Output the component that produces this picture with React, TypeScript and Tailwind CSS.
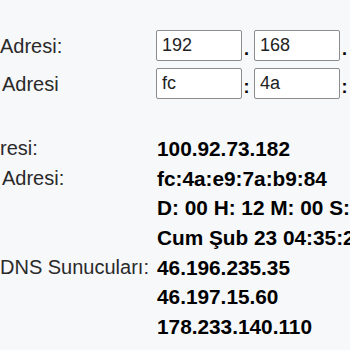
import React from "react";

const inputRows = [
  { label: "Adresi:", indent: "", sep: ".", values: ["192", "168", "1"] },
  { label: "Adresi", indent: "pl-[2px]", sep: ":", values: ["fc", "4a", "e9"] },
];

const infoRows = [
  { label: "resi:", indent: "", value: "100.92.73.182" },
  { label: "Adresi:", indent: "pl-[2px]", value: "fc:4a:e9:7a:b9:84" },
  { label: "", indent: "", value: "D: 00 H: 12 M: 00 S: 27" },
  { label: "", indent: "", value: "Cum Şub 23 04:35:27 2018" },
  { label: "DNS Sunucuları:", indent: "", value: "46.196.235.35" },
  { label: "", indent: "", value: "46.197.15.60" },
  { label: "", indent: "", value: "178.233.140.110" },
];

export default function App() {
  return (
    <div className="w-[350px] h-[350px] overflow-hidden bg-[#f6f8fa] font-['Liberation_Sans',Arial,sans-serif] text-[20px] text-[#2a2a2a]">
      <div className="pt-[30px] flex flex-col gap-[7px]">
        {inputRows.map((row, i) => (
          <div key={i} className="flex items-center h-[31px] whitespace-nowrap">
            <div className={`w-[156px] shrink-0 ${row.indent}`}>{row.label}</div>
            {row.values.map((v, j) => (
              <React.Fragment key={j}>
                {j > 0 && (
                  <span className="w-[12px] shrink-0 pr-[3px] text-center text-[18px] font-bold text-black leading-none pt-[6px]">
                    {row.sep}
                  </span>
                )}
                <input
                  readOnly
                  defaultValue={v}
                  className="w-[86px] h-[31px] shrink-0 rounded-[2px] border border-[#8c8c8c] bg-white pl-[5px] text-[18px] text-[#222] outline-none"
                />
              </React.Fragment>
            ))}
          </div>
        ))}
      </div>
      <div className="mt-[35px] flex flex-col">
        {infoRows.map((row, i) => (
          <div key={i} className="flex h-[29.7px] leading-[29.7px] whitespace-nowrap">
            <div className={`w-[157px] shrink-0 ${row.indent}`}>{row.label}</div>
            <div className="font-bold text-black text-[20.8px]">{row.value}</div>
          </div>
        ))}
      </div>
    </div>
  );
}
